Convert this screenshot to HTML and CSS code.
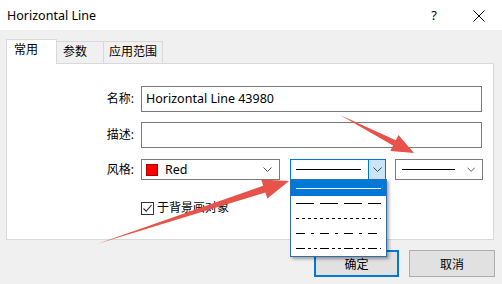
FILE: index.html
```html
<!DOCTYPE html>
<html lang="zh">
<head>
<meta charset="utf-8">
<title>Horizontal Line</title>
<link rel="stylesheet" href="styles.css">
</head>
<body>
<div class="window">
  <div class="titlebar">
    <span class="title">Horizontal Line</span>
    <span class="help">?</span>
    <svg class="close" width="12" height="12" viewBox="0 0 12 12"><path d="M0.5 0.5 L11.5 11.5 M11.5 0.5 L0.5 11.5" stroke="#000" stroke-width="1" fill="none"/></svg>
  </div>
  <div class="content">
    <div class="tabs">
      <div class="tab active">常用</div>
      <div class="tab t2">参数</div>
      <div class="tab t3">应用范围</div>
    </div>
    <div class="panel">
      <div class="form">
        <label class="lbl">名称:</label>
        <div class="input">Horizontal Line 43980</div>
        <label class="lbl">描述:</label>
        <div class="input"></div>
        <label class="lbl row3">风格:</label>
        <div class="combos row3">
          <div class="combo color">
            <span class="swatch"></span>
            <span class="ctext">Red</span>
            <svg class="chev" width="9" height="5" viewBox="0 0 9 5"><path d="M0.5 0.5 L4.5 4.5 L8.5 0.5" stroke="#555" fill="none"/></svg>
          </div>
          <div class="combo style focus">
            <span class="line solid"></span>
            <span class="dbtn"><svg width="9" height="5" viewBox="0 0 9 5"><path d="M0.5 0.5 L4.5 4.5 L8.5 0.5" stroke="#444" fill="none"/></svg></span>
          </div>
          <div class="combo width">
            <span class="line solid w"></span>
            <svg class="chev" width="9" height="5" viewBox="0 0 9 5"><path d="M0.5 0.5 L4.5 4.5 L8.5 0.5" stroke="#555" fill="none"/></svg>
          </div>
        </div>
        <div class="check row4">
          <span class="box"><svg width="11" height="11" viewBox="0 0 11 11"><path d="M1.5 5.5 L4.2 8.3 L9.5 2" stroke="#222" stroke-width="1.1" fill="none"/></svg></span>
          <span class="clabel">于背景画对象</span>
        </div>
      </div>
    </div>
    <div class="buttons">
      <div class="btn primary">确定</div>
      <div class="btn">取消</div>
    </div>
  </div>

  <div class="dropdown">
    <div class="item sel"><span class="pat p-solid"></span></div>
    <div class="item"><span class="pat p-dash"></span></div>
    <div class="item"><span class="pat p-dot"></span></div>
    <div class="item"><span class="pat p-dashdot"></span></div>
    <div class="item"><span class="pat p-dashdotdot"></span></div>
  </div>

  <svg class="arrows" width="502" height="284" viewBox="0 0 502 284">
    <polygon points="340,115 395.8,140.3 398.5,134.9 414,153 390.3,151 393,145.6" fill="#e5534b"/>
    <polygon points="97,244 263.2,185.8 261.2,179.6 289,181 267.4,198.6 265.4,192.4" fill="#e5534b"/>
  </svg>
</div>
</body>
</html>
```

FILE: styles.css
```css
* { box-sizing: border-box; }

body {
  margin: 0;
  width: 502px;
  height: 284px;
  overflow: hidden;
  background: #f0f0f0;
  font-family: "Noto Sans", "Noto Sans CJK SC", sans-serif;
  font-size: 12px;
  color: #000;
}

.window {
  position: relative;
  height: 284px;
}

.titlebar {
  height: 30px;
  background: #fff;
  display: flex;
  align-items: center;
  padding-left: 7px;
}

.title {
  flex: 1;
  font-size: 12.5px;
}

.help {
  font-size: 13px;
  margin-right: 36px;
}

.close {
  margin-right: 17px;
  margin-top: 1px;
}

.content {
  padding: 9px 0 0 6px;
}

.tabs {
  display: flex;
  align-items: flex-end;
  height: 24px;
  position: relative;
  z-index: 1;
}

.tab {
  height: 22px;
  border: 1px solid #d9d9d9;
  border-bottom: none;
  background: #f0f0f0;
  padding: 2px 0 0 5px;
  line-height: 16px;
  margin-left: -1px;
}

.tab.active {
  width: 51px;
  height: 25px;
  margin-left: 0;
  margin-bottom: -1px;
  background: #fff;
  padding-left: 7px;
}

.tab.t2 { width: 47px; margin-left: 0; border-left: none; padding-left: 6px; }
.tab.t3 { width: 60px; }

.panel {
  width: 488px;
  height: 177px;
  border: 1px solid #d9d9d9;
  background: #fff;
  padding-top: 22px;
}

.form {
  display: grid;
  grid-template-columns: 127px 341px;
  grid-auto-rows: auto;
  column-gap: 7px;
  row-gap: 10px;
  align-items: center;
}

.lbl {
  text-align: right;
  line-height: 16px;
}

.input {
  height: 26px;
  border: 1px solid #7a7a7a;
  background: #fff;
  padding-left: 4px;
  line-height: 23px;
  font-size: 12.5px;
}

.row3 { margin-top: 1px; }

.combos {
  display: flex;
  gap: 10px;
  width: 360px;
}

.combo {
  height: 21px;
  border: 1px solid #7a7a7a;
  background: #fff;
  display: flex;
  align-items: center;
}

.combo.color { width: 139px; }
.combo.style { width: 96px; border-color: #0078d7; }
.combo.width { width: 88px; margin-left: -1px; }

.swatch {
  width: 12px;
  height: 12px;
  background: #ff0000;
  border: 1px solid #b00000;
  margin-left: 4px;
}

.ctext {
  margin-left: 7px;
  flex: 1;
  font-size: 12.5px;
}

.chev {
  margin-right: 7px;
}

.line {
  height: 1px;
  background: #000;
}

.combo.style .line {
  width: 65px;
  margin-left: 5px;
  flex: none;
}

.line.w {
  width: 57px;
  margin-left: 6px;
  margin-right: 12px;
}

.dbtn {
  margin-left: auto;
  width: 17px;
  height: 19px;
  background: #cce4f7;
  border-left: 1px solid #0078d7;
  display: flex;
  align-items: center;
  justify-content: center;
}

.check {
  grid-column: 2;
  display: flex;
  align-items: center;
  margin-top: 10px;
}

.box {
  width: 13px;
  height: 13px;
  border: 1px solid #333;
  background: #fff;
  display: flex;
  align-items: center;
  justify-content: center;
}

.clabel {
  margin-left: 3px;
  line-height: 16px;
}

.buttons {
  display: flex;
  justify-content: flex-end;
  gap: 10px;
  padding-right: 7px;
  margin-top: 10px;
}

.btn {
  width: 86px;
  height: 27px;
  border: 1px solid #adadad;
  background: #e1e1e1;
  display: flex;
  align-items: center;
  justify-content: center;
}

.btn.primary {
  width: 85px;
  border: 2px solid #0078d7;
}

.dropdown {
  position: absolute;
  left: 290px;
  top: 179px;
  width: 97px;
  background: #fff;
  border: 1px solid #2f6ea8;
  box-shadow: 2px 2px 3px rgba(0, 0, 0, 0.35);
  z-index: 5;
}

.item {
  height: 15px;
  display: flex;
  align-items: center;
  padding-left: 5px;
}

.item.sel {
  background: #0078d7;
  height: 16px;
}

.pat {
  width: 85px;
  height: 1px;
}

.p-solid { background: #fff; }
.p-dash { background: repeating-linear-gradient(to right, #000 0 18px, transparent 18px 24px); }
.p-dot { background: repeating-linear-gradient(to right, #000 0 3px, transparent 3px 6px); }
.p-dashdot { background: repeating-linear-gradient(to right, #000 0 9px, transparent 9px 15px, #000 15px 18px, transparent 18px 24px); }
.p-dashdotdot { background: repeating-linear-gradient(to right, #000 0 9px, transparent 9px 12px, #000 12px 15px, transparent 15px 18px, #000 18px 21px, transparent 21px 24px); }

.arrows {
  position: absolute;
  left: 0;
  top: 0;
  z-index: 10;
  pointer-events: none;
}
```
